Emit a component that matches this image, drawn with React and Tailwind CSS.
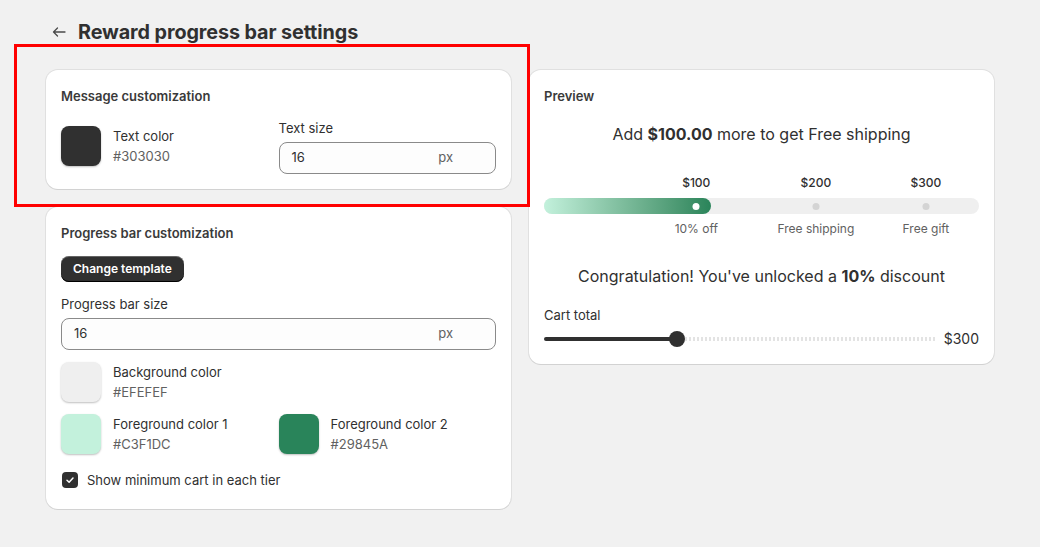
import React from "react";

function Swatch({ color, label, hex }) {
  return (
    <div className="flex items-center gap-3">
      <div
        className="w-10 h-10 rounded-lg shadow-[0_1px_2px_rgba(0,0,0,0.25)]"
        style={{ backgroundColor: color }}
      />
      <div className="flex flex-col">
        <span className="text-[13px] leading-5 text-[#303030]">{label}</span>
        <span className="text-[13px] leading-5 text-[#616161]">{hex}</span>
      </div>
    </div>
  );
}

function PxInput({ value }) {
  return (
    <div className="h-8 rounded-lg border border-[#8a8a8a] bg-[#fdfdfd] flex items-center pl-3 pr-[42px]">
      <span className="flex-1 text-[13px] text-[#303030]">{value}</span>
      <span className="text-[13px] text-[#616161]">px</span>
    </div>
  );
}

const card =
  "bg-white rounded-xl shadow-[0_1px_0_0_rgba(26,26,26,0.07),0_0_0_1px_rgba(0,0,0,0.07)]";

export default function App() {
  return (
    <div
      className="relative min-h-[547px] bg-[#f1f1f1] px-[46px] pt-[18px]"
      style={{ fontFamily: "Inter, 'Noto Sans', sans-serif" }}
    >
      <div className="flex items-center gap-3 pl-[6px] mb-6 h-7">
        <svg width="14" height="14" viewBox="0 0 14 14" fill="none">
          <path
            d="M13 7H1.5M5.5 3L1.5 7L5.5 11"
            stroke="#4a4a4a"
            strokeWidth="1.3"
            strokeLinecap="round"
            strokeLinejoin="round"
          />
        </svg>
        <h1 className="text-[19.8px] leading-7 font-bold text-[#303030] tracking-[-0.1px]">
          Reward progress bar settings
        </h1>
      </div>

      <div className="grid grid-cols-2 gap-[18px] items-start">
        <div className="flex flex-col gap-[18px]">
          <div className={`${card} px-[15px] pt-4 pb-[15px] flex flex-col gap-3`}>
            <h2 className="text-[13px] leading-5 font-semibold text-[#3a3a3a]">
              Message customization
            </h2>
            <div className="grid grid-cols-2 items-center">
              <Swatch color="#303030" label="Text color" hex="#303030" />
              <div className="flex flex-col gap-1">
                <span className="text-[13px] leading-5 text-[#303030]">Text size</span>
                <PxInput value="16" />
              </div>
            </div>
          </div>

          <div className={`${card} px-[15px] pt-4 pb-[19px] flex flex-col`}>
            <h2 className="text-[13px] leading-5 font-semibold text-[#3a3a3a]">
              Progress bar customization
            </h2>
            <div className="mt-3">
              <button className="h-[26px] px-3 rounded-lg bg-[#303030] text-white text-[12px] font-semibold shadow-[inset_0_-1px_0_#000,inset_0_1px_0_rgba(255,255,255,0.25)]">
                Change template
              </button>
            </div>
            <span className="mt-3 text-[13px] leading-5 text-[#303030]">Progress bar size</span>
            <div className="mt-1">
              <PxInput value="16" />
            </div>
            <div className="mt-3">
              <Swatch color="#EFEFEF" label="Background color" hex="#EFEFEF" />
            </div>
            <div className="mt-3 grid grid-cols-2">
              <Swatch color="#C3F1DC" label="Foreground color 1" hex="#C3F1DC" />
              <Swatch color="#29845A" label="Foreground color 2" hex="#29845A" />
            </div>
            <div className="mt-4 h-5 flex items-center gap-[9px] pl-px">
              <span className="w-4 h-4 rounded bg-[#303030] flex items-center justify-center">
                <svg width="10" height="10" viewBox="0 0 10 10" fill="none">
                  <path d="M2 5.2L4.1 7.2L8 3" stroke="white" strokeWidth="1.5" strokeLinecap="round" strokeLinejoin="round" />
                </svg>
              </span>
              <span className="text-[13px] leading-5 text-[#303030]">Show minimum cart in each tier</span>
            </div>
          </div>
        </div>

        <div className={`${card} px-[15px] pt-4 pb-[15px] flex flex-col`}>
          <h2 className="text-[13px] leading-5 font-semibold text-[#3a3a3a]">Preview</h2>
          <p className="mt-4 text-center text-[16px] leading-6 text-[#303030]">
            Add <span className="font-bold">$100.00</span> more to get Free shipping
          </p>

          <div className="mt-[27px] relative h-5">
            <span className="absolute left-[35%] -translate-x-1/2 text-[12px] leading-5 font-medium text-[#303030]">$100</span>
            <span className="absolute left-[62.5%] -translate-x-1/2 text-[12px] leading-5 font-medium text-[#303030]">$200</span>
            <span className="absolute left-[87.8%] -translate-x-1/2 text-[12px] leading-5 font-medium text-[#303030]">$300</span>
          </div>
          <div className="mt-[5px] relative h-4 rounded-full bg-[#efefef]">
            <div className="h-4 w-[38.4%] rounded-full bg-gradient-to-r from-[#C3F1DC] to-[#29845A]" />
            <span className="absolute top-[5px] left-[35%] -translate-x-1/2 w-[7px] h-[7px] rounded-full bg-white" />
            <span className="absolute top-[5px] left-[62.5%] -translate-x-1/2 w-[7px] h-[7px] rounded-full bg-[#d4d4d4]" />
            <span className="absolute top-[5px] left-[87.8%] -translate-x-1/2 w-[7px] h-[7px] rounded-full bg-[#d4d4d4]" />
          </div>
          <div className="mt-[5px] relative h-5">
            <span className="absolute left-[35%] -translate-x-1/2 whitespace-nowrap text-[12px] leading-5 text-[#616161]">10% off</span>
            <span className="absolute left-[62.5%] -translate-x-1/2 whitespace-nowrap text-[12px] leading-5 text-[#616161]">Free shipping</span>
            <span className="absolute left-[87.8%] -translate-x-1/2 whitespace-nowrap text-[12px] leading-5 text-[#616161]">Free gift</span>
          </div>

          <p className="mt-[25px] text-center text-[16px] leading-6 text-[#303030]">
            Congratulation! You've unlocked a <span className="font-bold">10%</span> discount
          </p>

          <span className="mt-[17px] text-[13px] leading-5 text-[#303030]">Cart total</span>
          <div className="mt-1 h-5 flex items-center gap-[9px]">
            <div className="relative flex-1 h-4 flex items-center">
              <div className="w-[34%] h-1 rounded-full bg-[#303030]" />
              <div className="flex-1 h-1 bg-[repeating-linear-gradient(90deg,#e3e3e3_0_2px,transparent_2px_4px)]" />
              <span className="absolute left-[34%] -translate-x-1/2 w-4 h-4 rounded-full bg-[#303030]" />
            </div>
            <span className="text-[14px] leading-5 text-[#303030]">$300</span>
          </div>
        </div>
      </div>

      <div className="absolute left-[14px] top-[44px] w-[516px] h-[163px] border-[3px] border-[#ff0000] pointer-events-none" />
    </div>
  );
}
